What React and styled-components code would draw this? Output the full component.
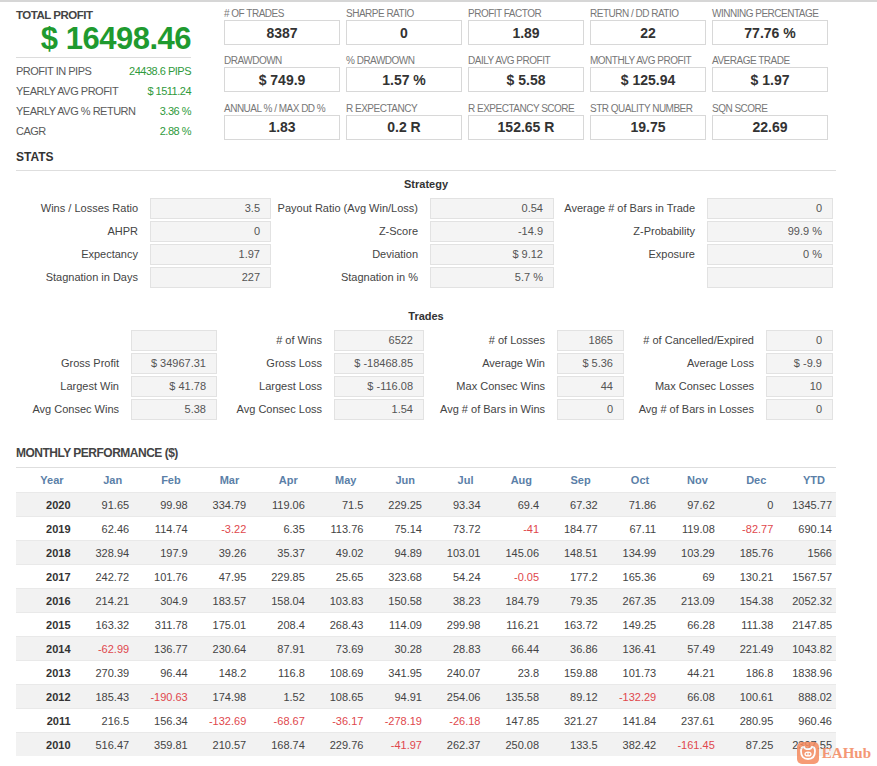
import React from "react";
import styled, { createGlobalStyle } from "styled-components";

const Global = createGlobalStyle`
  html, body { margin: 0; padding: 0; background: #fff; }
  body { font-family: "Liberation Sans", Arial, sans-serif; color: #444; }
`;

const Page = styled.div`
  border-top: 2px solid #d6d6d6;
  padding: 6px 41px 0 16px;
  width: 820px;
  position: relative;
  min-height: 758px;
`;

const Top = styled.div`
  display: flex;
  gap: 33px;
`;

const Summary = styled.div`
  width: 175px;
`;

const TotalLabel = styled.div`
  font-size: 11.5px;
  font-weight: bold;
  letter-spacing: -0.5px;
  line-height: 14px;
  color: #444;
`;

const BigValue = styled.div`
  font-size: 31px;
  font-weight: bold;
  letter-spacing: -0.5px;
  line-height: 36px;
  color: #1f9a2f;
  text-align: right;
  margin-top: -1px;
  border-bottom: 1px solid #dcdcdc;
`;

const SummaryRows = styled.div`
  padding-top: 3px;
`;

const SummaryRow = styled.div`
  display: flex;
  justify-content: space-between;
  font-size: 11px;
  letter-spacing: -0.5px;
  line-height: 20px;
  color: #5a5a5a;
`;

const Green = styled.span`
  color: #2f9a3c;
`;

const Cards = styled.div`
  display: grid;
  grid-template-columns: repeat(5, 116px);
  column-gap: 6px;
  row-gap: 9px;
`;

const Card = styled.div`
  display: flex;
  flex-direction: column;
`;

const CardLabel = styled.div`
  font-size: 10px;
  letter-spacing: -0.5px;
  line-height: 12px;
  color: #777;
  white-space: nowrap;
`;

const CardBox = styled.div`
  height: 23px;
  border: 1px solid #d8d8d8;
  display: flex;
  align-items: center;
  justify-content: center;
  font-size: 14px;
  font-weight: bold;
  color: #333;
`;

const StatsHeading = styled.div`
  margin-top: 8px;
  font-size: 12px;
  font-weight: bold;
  line-height: 16px;
  color: #333;
  padding-bottom: 5px;
  border-bottom: 1px solid #dedede;
`;

const SubHeading = styled.div`
  margin-top: ${(p) => p.$mt}px;
  text-align: center;
  font-size: 11px;
  font-weight: bold;
  line-height: 14px;
  color: #333;
`;

const Grid = styled.div`
  margin-top: 7px;
  display: grid;
  grid-template-columns: ${(p) => p.$cols};
  row-gap: 2px;
  grid-auto-rows: 21px;
`;

const Label = styled.div`
  font-size: 11px;
  color: #444;
  text-align: right;
  padding-right: 12px;
  line-height: 21px;
  white-space: nowrap;
`;

const ValBox = styled.div`
  box-sizing: border-box;
  background: #f4f4f4;
  border: 1px solid #e2e2e2;
  font-size: 11px;
  color: #555;
  text-align: right;
  padding-right: 10px;
  line-height: 19px;
  white-space: nowrap;
`;

const MonthlyHeading = styled.div`
  margin-top: 25px;
  font-size: 12px;
  font-weight: bold;
  letter-spacing: -0.5px;
  line-height: 16px;
  color: #444;
  padding-bottom: 6px;
`;

const Table = styled.table`
  width: 820px;
  table-layout: fixed;
  border-collapse: collapse;
  border-top: 1px solid #dedede;
  font-size: 11px;
`;

const Th = styled.th`
  height: 24px;
  padding: 0 11px 0 0;
  text-align: right;
  font-weight: bold;
  color: #5b7fa8;
`;

const Tr = styled.tr`
  background: ${(p) => (p.$odd ? "#f2f2f2" : "#fff")};
  border-top: 1px solid #e9e9e9;
`;

const Td = styled.td`
  height: 23px;
  padding: 0 4px 0 0;
  text-align: right;
  color: ${(p) => (p.$neg ? "#e0474c" : p.$year ? "#333" : "#444")};
  font-weight: ${(p) => (p.$year ? "bold" : "normal")};
  white-space: nowrap;
`;

const Watermark = styled.div`
  position: absolute;
  right: 6px;
  bottom: 2px;
  display: flex;
  align-items: center;
  gap: 3px;
  opacity: 0.85;
`;

const WatermarkText = styled.span`
  font-family: "Liberation Serif", "DejaVu Serif", serif;
  font-size: 15px;
  font-weight: bold;
  color: #f3875d;
`;

const cards = [
  ["# OF TRADES", "8387"],
  ["SHARPE RATIO", "0"],
  ["PROFIT FACTOR", "1.89"],
  ["RETURN / DD RATIO", "22"],
  ["WINNING PERCENTAGE", "77.76 %"],
  ["DRAWDOWN", "$ 749.9"],
  ["% DRAWDOWN", "1.57 %"],
  ["DAILY AVG PROFIT", "$ 5.58"],
  ["MONTHLY AVG PROFIT", "$ 125.94"],
  ["AVERAGE TRADE", "$ 1.97"],
  ["ANNUAL % / MAX DD %", "1.83"],
  ["R EXPECTANCY", "0.2 R"],
  ["R EXPECTANCY SCORE", "152.65 R"],
  ["STR QUALITY NUMBER", "19.75"],
  ["SQN SCORE", "22.69"],
];

const strategy = [
  ["Wins / Losses Ratio", "3.5", "Payout Ratio (Avg Win/Loss)", "0.54", "Average # of Bars in Trade", "0"],
  ["AHPR", "0", "Z-Score", "-14.9", "Z-Probability", "99.9 %"],
  ["Expectancy", "1.97", "Deviation", "$ 9.12", "Exposure", "0 %"],
  ["Stagnation in Days", "227", "Stagnation in %", "5.7 %", "", ""],
];

const trades = [
  ["", "", "# of Wins", "6522", "# of Losses", "1865", "# of Cancelled/Expired", "0"],
  ["Gross Profit", "$ 34967.31", "Gross Loss", "$ -18468.85", "Average Win", "$ 5.36", "Average Loss", "$ -9.9"],
  ["Largest Win", "$ 41.78", "Largest Loss", "$ -116.08", "Max Consec Wins", "44", "Max Consec Losses", "10"],
  ["Avg Consec Wins", "5.38", "Avg Consec Loss", "1.54", "Avg # of Bars in Wins", "0", "Avg # of Bars in Losses", "0"],
];

const headers = ["Year", "Jan", "Feb", "Mar", "Apr", "May", "Jun", "Jul", "Aug", "Sep", "Oct", "Nov", "Dec", "YTD"];

const monthly = [
  ["2020", "91.65", "99.98", "334.79", "119.06", "71.5", "229.25", "93.34", "69.4", "67.32", "71.86", "97.62", "0", "1345.77"],
  ["2019", "62.46", "114.74", "-3.22", "6.35", "113.76", "75.14", "73.72", "-41", "184.77", "67.11", "119.08", "-82.77", "690.14"],
  ["2018", "328.94", "197.9", "39.26", "35.37", "49.02", "94.89", "103.01", "145.06", "148.51", "134.99", "103.29", "185.76", "1566"],
  ["2017", "242.72", "101.76", "47.95", "229.85", "25.65", "323.68", "54.24", "-0.05", "177.2", "165.36", "69", "130.21", "1567.57"],
  ["2016", "214.21", "304.9", "183.57", "158.04", "103.83", "150.58", "38.23", "184.79", "79.35", "267.35", "213.09", "154.38", "2052.32"],
  ["2015", "163.32", "311.78", "175.01", "208.4", "268.43", "114.09", "299.98", "116.21", "163.72", "149.25", "66.28", "111.38", "2147.85"],
  ["2014", "-62.99", "136.77", "230.64", "87.91", "73.69", "30.28", "28.83", "66.44", "36.86", "136.41", "57.49", "221.49", "1043.82"],
  ["2013", "270.39", "96.44", "148.2", "116.8", "108.69", "341.95", "240.07", "23.8", "159.88", "101.73", "44.21", "186.8", "1838.96"],
  ["2012", "185.43", "-190.63", "174.98", "1.52", "108.65", "94.91", "254.06", "135.58", "89.12", "-132.29", "66.08", "100.61", "888.02"],
  ["2011", "216.5", "156.34", "-132.69", "-68.67", "-36.17", "-278.19", "-26.18", "147.85", "321.27", "141.84", "237.61", "280.95", "960.46"],
  ["2010", "516.47", "359.81", "210.57", "168.74", "229.76", "-41.97", "262.37", "250.08", "133.5", "382.42", "-161.45", "87.25", "2397.55"],
];

function PairGrid({ rows, cols }) {
  return (
    <Grid $cols={cols}>
      {rows.map((r, i) =>
        r.map((c, j) =>
          j % 2 === 0 ? (
            <Label key={`${i}-${j}`}>{c}</Label>
          ) : (
            <ValBox key={`${i}-${j}`}>{c}</ValBox>
          )
        )
      )}
    </Grid>
  );
}

function PigIcon() {
  return (
    <svg width="22" height="22" viewBox="0 0 22 22">
      <rect x="0" y="0" width="22" height="22" rx="5" fill="#f58a5e" />
      <path d="M4 9 Q4 5 7 5 Q8 7 9.5 7 L12.5 7 Q14 7 15 5 Q18 5 18 9 Q18 17 11 17 Q4 17 4 9 Z" fill="none" stroke="#fff" strokeWidth="1.8" />
      <ellipse cx="11" cy="12" rx="3.6" ry="2.6" fill="#fff" />
      <circle cx="9.7" cy="12" r="0.9" fill="#f58a5e" />
      <circle cx="12.3" cy="12" r="0.9" fill="#f58a5e" />
    </svg>
  );
}

export default function App() {
  return (
    <>
      <Global />
      <Page>
        <Top>
          <Summary>
            <TotalLabel>TOTAL PROFIT</TotalLabel>
            <BigValue>$ 16498.46</BigValue>
            <SummaryRows>
              <SummaryRow>
                <span>PROFIT IN PIPS</span>
                <Green>24438.6 PIPS</Green>
              </SummaryRow>
              <SummaryRow>
                <span>YEARLY AVG PROFIT</span>
                <Green>$ 1511.24</Green>
              </SummaryRow>
              <SummaryRow>
                <span>YEARLY AVG % RETURN</span>
                <Green>3.36 %</Green>
              </SummaryRow>
              <SummaryRow>
                <span>CAGR</span>
                <Green>2.88 %</Green>
              </SummaryRow>
            </SummaryRows>
          </Summary>
          <Cards>
            {cards.map(([l, v]) => (
              <Card key={l}>
                <CardLabel>{l}</CardLabel>
                <CardBox>{v}</CardBox>
              </Card>
            ))}
          </Cards>
        </Top>

        <StatsHeading>STATS</StatsHeading>

        <SubHeading $mt={6}>Strategy</SubHeading>
        <PairGrid rows={strategy} cols="134px 121px 159px 124px 153px 126px" />

        <SubHeading $mt={21}>Trades</SubHeading>
        <PairGrid rows={trades} cols="115px 86px 117px 90px 133px 67px 142px 67px" />

        <MonthlyHeading>MONTHLY PERFORMANCE ($)</MonthlyHeading>
        <Table>
          <thead>
            <tr>
              {headers.map((h) => (
                <Th key={h}>{h}</Th>
              ))}
            </tr>
          </thead>
          <tbody>
            {monthly.map((row, i) => (
              <Tr key={row[0]} $odd={i % 2 === 0}>
                {row.map((v, j) => (
                  <Td key={j} $year={j === 0} $neg={v.startsWith("-")}>
                    {v}
                  </Td>
                ))}
              </Tr>
            ))}
          </tbody>
        </Table>

        <Watermark>
          <PigIcon />
          <WatermarkText>EAHub</WatermarkText>
        </Watermark>
      </Page>
    </>
  );
}
